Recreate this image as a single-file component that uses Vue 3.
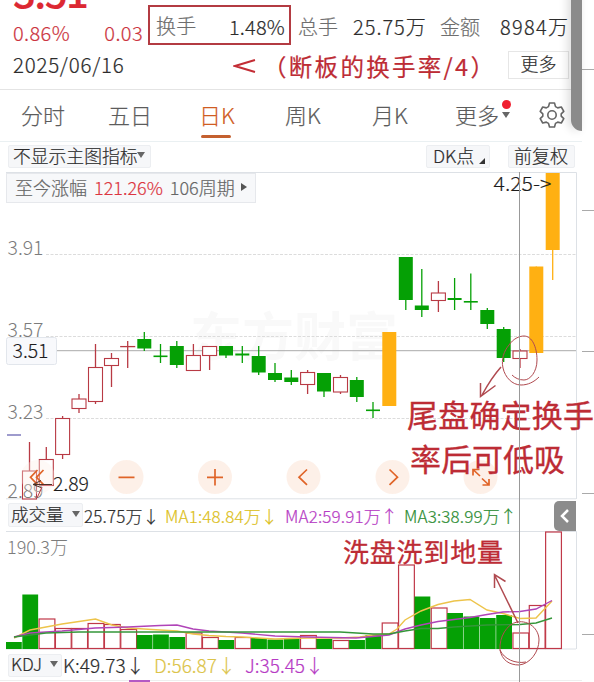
<script setup>
const GREEN = '#05a005'
const RED = '#b83a44'
const ORANGE = '#ffb012'

// [center x, kind, high, body top, body bottom, low]
const candles = [
  [29.5, 'r', 442, 471, 499, 499], [46.3, 'r', 447, 459.5, 485.5, 485.5],
  [62.6, 'r', 416, 418.5, 454.5, 459], [79, 'r', 394, 399, 408.5, 413],
  [95.5, 'r', 344, 367.5, 401.5, 404], [111.5, 'r', 353, 358.5, 365.5, 387],
  [127.7, 'r', 341, 346.5, 346.5, 368], [144.3, 'g', 332, 339, 348.5, 351],
  [160.5, 'g', 344, 355.5, 355.5, 363], [176.8, 'g', 341, 346, 365, 368],
  [193.4, 'r', 344, 355.5, 370.5, 370.5], [209.6, 'r', 346, 346.5, 355.5, 370],
  [226, 'g', 346, 346, 355.5, 358], [242.3, 'g', 346, 353.5, 355.5, 363],
  [258.7, 'g', 346, 356, 372.5, 375], [275, 'g', 363, 373, 380, 382],
  [291.3, 'g', 370, 377.5, 382, 385], [307.6, 'r', 370, 372.5, 384.5, 394],
  [324, 'g', 373, 373, 391.5, 397], [340.5, 'r', 375, 377.5, 392, 394],
  [356.8, 'g', 377, 380, 397, 402], [373, 'g', 402, 409.5, 410.5, 418],
  [389.3, 'o', 332, 332, 406, 406], [405.8, 'g', 257, 257, 300, 310],
  [421.8, 'g', 269, 305.5, 310, 317], [438.4, 'r', 281, 293, 300.5, 312],
  [454.6, 'g', 278, 298, 300, 310], [470.8, 'g', 273.5, 301, 302.5, 310],
  [487.3, 'g', 308, 310, 324, 329], [503.7, 'g', 327, 329, 358, 362],
  [520, 'r', 349, 351, 358.5, 368], [536.3, 'o', 266.5, 266.5, 353, 353],
  [552.7, 'o', 173, 173, 250, 280],
].map(([x, k, h, t, b, l]) => ({
  x, t, h, l, b, k,
  height: Math.max(b - t, 1.6),
  color: k === 'r' ? RED : k === 'g' ? GREEN : ORANGE,
}))

const volumes = [
  ['g', 642], ['g', 594.5], ['r', 619], ['r', 628.5], ['r', 628.5], ['r', 623.5], ['r', 624.5],
  ['r', 629.5], ['g', 635], ['g', 634.5], ['g', 637], ['r', 633], ['r', 637.5], ['g', 640],
  ['r', 637.5], ['g', 638], ['g', 639.5], ['g', 639], ['r', 635.5], ['g', 639], ['r', 640.5],
  ['g', 640], ['g', 635], ['r', 623], ['r', 565], ['g', 596.5], ['r', 608], ['g', 613],
  ['g', 616.5], ['g', 618], ['g', 615], ['r', 633], ['r', 605.5], ['r', 532],
].map(([k, top], i) => ({ k, top, x: 6 + i * 16.34 }))

const maYellow = '14,638 30,630 46,627 62,624 79,621.5 95.5,619 112,625 128,628 144,629 160,630 177,631 193,634 209,635.5 226,636.5 242,637 258,638 275,639 307,638 340,638 360,637 373,635 389,634 397,629 405,620 421,611 438,604.5 454,601 470,599.5 487,610 503,613.5 520,618.5 536,618 552,601'
const maPurple = '14,637 30,633 62,631 95,628 128,627 160,625.5 177,625 193,629 209,631 242,633 275,636 307,637 356,638 389,635 405,629 421,625 438,621.5 454,619.5 470,617.5 487,614.5 503,612 520,611.5 536,609 552,600.5'
const maGreen = '14,637 46,633 79,632 340,632 373,634 389,634 405,631 421,628.5 438,628.5 454,627 487,625 520,624.5 536,623 552,618'

const gridLines = [254.5, 336.5, 418.5]
const axis = [['3.91', 254.5], ['3.57', 336.5], ['3.23', 418.5], ['2.89', 498]]
const tabs = ['分时', '五日', '日K', '周K', '月K']
const controls = [126.5, 215, 303.5, 392.5, 480.5]
const ticks = [69, 210, 351, 493, 634]
</script>

<template>
  <div class="page">
    <main class="screen">
      <header class="quote">
        <div class="left">
          <div class="price">3.51</div>
          <div class="change"><span>0.86%</span><span>0.03</span></div>
        </div>
        <div class="turnover"><span class="label">换手</span><span>1.48%</span></div>
        <div class="stat"><span class="label">总手</span><span class="total">25.75万</span></div>
        <div class="stat"><span class="label">金额</span><span class="amount">8984万</span></div>
      </header>
      <div class="dateline">
        <span class="date">2025/06/16</span>
        <svg class="less" width="24" height="16" viewBox="0 0 24 16"><path d="M22 2 2 8l20 6" /></svg>
        <span class="note">（断板的换手率/4）</span>
        <span class="more">更多</span>
      </div>
      <nav class="tabs">
        <span v-for="t in tabs" :key="t" class="tab" :class="{ active: t === '日K' }">{{ t }}</span>
        <span class="tab tab-more">更多<i class="dot"></i><i class="caret"></i></span>
        <svg class="gear" width="26" height="26" viewBox="0 0 26 26">
          <path d="M10.500 1h5l1 3.600 2.200 1.300 3.600-.9 2.500 4.300-2.600 2.500v2.400l2.600 2.500-2.500 4.300-3.600-.9-2.200 1.300-1 3.600h-5l-1-3.600-2.200-1.300-3.600.9-2.500-4.300 2.600-2.500v-2.400L1.200 9.300 3.700 5l3.600.9 2.200-1.300z" />
          <circle cx="13" cy="13" r="4.200" />
        </svg>
      </nav>
      <div class="toolbar">
        <span class="chip main">不显示主图指标<i class="caret"></i></span>
        <span class="chip dk">DK点<i class="corner"></i></span>
        <span class="chip adj">前复权</span>
      </div>

      <section class="chart">
        <svg width="582" height="327" viewBox="0 172 582 327" font-family="'Noto Sans CJK SC', sans-serif">
          <g class="watermark"><text x="190" y="356" font-size="52" textLength="208" lengthAdjust="spacingAndGlyphs">东方财富</text></g>
          <line v-for="y in gridLines" :key="y" x1="46" x2="576" :y1="y" :y2="y" class="grid" />
          <path d="M6 172.500H576.500V499M6 498.800H576" class="frame" />
          <line x1="56" x2="576" y1="350.700" y2="350.700" class="cross" />
          <line x1="7" x2="21" y1="435" y2="435" stroke="#7470b8" stroke-width="1.400" />
          <g v-for="c in candles" :key="c.x">
            <template v-if="c.k === 'r'">
              <path :d="`M${c.x} ${c.h}V${c.t}M${c.x} ${c.b}V${c.l}`" :stroke="c.color" stroke-width="1.300" />
              <rect :x="c.x - 7" :y="c.t" width="14" :height="c.b - c.t || 0.200" fill="#fff" :stroke="c.color" stroke-width="1.100" />
            </template>
            <template v-else>
              <line :x1="c.x" :x2="c.x" :y1="c.h" :y2="c.l" :stroke="c.color" stroke-width="1.300" />
              <rect :x="c.x - 7" :y="c.t" width="14" :height="c.height" :fill="c.color" />
            </template>
          </g>
          <text v-for="a in axis" :key="a[0]" x="7.500" :y="a[1]" class="axis" textLength="36" lengthAdjust="spacingAndGlyphs">{{ a[0] }}</text>
          <circle v-for="x in controls" :key="x" :cx="x" cy="477" r="17" fill="#fdeee6" fill-opacity=".9" />
          <circle cx="38" cy="477" r="17" fill="#fdeee6" fill-opacity=".35" />
          <g class="icons">
            <path d="M118.500 477.300h16M207 477.300h16M215 469v16.500M307 469.500l-8 7.700 8 7.700M389.500 469.500l8 7.700-8 7.700" />
            <path d="M480 476l-7-6.500m0 6v-6h6.500M482 478.500l7 6.500m0-6v6h-6.500" />
            <path d="M37.500 470l-7 7.300 7 7.300M43.500 470l-7 7.300 7 7.300" />
          </g>
          <path d="M37 498l5-11" stroke="#b83a44" fill="none" />
          <path d="M41 480.500l-8 4 8 3M33 484.500h19" stroke="#4a3028" fill="none" />
          <text x="53" y="491" class="mark" textLength="36" lengthAdjust="spacingAndGlyphs">2.89</text>
          <text x="493.500" y="191" class="mark" textLength="58" lengthAdjust="spacingAndGlyphs">4.25-&gt;</text>
          <rect x="6.500" y="337.500" width="50" height="27" rx="2" fill="#f8f9fc" stroke="#e2e6ec" />
          <text x="12.500" y="358" class="mark" textLength="36" lengthAdjust="spacingAndGlyphs">3.51</text>
          <g class="pen">
            <path d="M509 345c4-6 10-9 15-9 8 0 13 11 13 24 0 12-7 20-13 20-5 0-9-2-12-5M509 345c-5 6-8 14-6 23 2 9 9 17 18 17 7 0 13-3 18-8" />
            <path d="M501 367c-8 9-13 17-19 28M480.500 383v13.500l15-11" stroke-width="1.500" />
          </g>
          <g class="hand">
            <text x="407" y="427" font-size="31" textLength="187">尾盘确定换手</text>
            <text x="410" y="471" font-size="31" textLength="155">率后可低吸</text>
          </g>
        </svg>
        <div class="gain"><span>至今涨幅</span><b>121.26%</b><span>106周期</span><i></i></div>
      </section>

      <div class="legend">
        <span class="chip pick">成交量<i class="caret"></i></span>
        <span class="v1">25.75万↓</span>
        <span class="v2">MA1:48.84万↓</span>
        <span class="v3">MA2:59.91万↑</span>
        <span class="v4">MA3:38.99万↑</span>
        <span class="fold"><svg width="10" height="16" viewBox="0 0 10 16"><path d="M8 2 2 8l6 6" /></svg></span>
      </div>

      <section class="volume">
        <svg width="582" height="119" viewBox="0 531 582 119" font-family="'Noto Sans CJK SC', sans-serif">
          <path d="M6 531.500H576.500V649M6 649H576" class="frame" />
          <text x="7" y="553.500" class="axis scale" textLength="61" lengthAdjust="spacingAndGlyphs">190.3万</text>
          <g v-for="v in volumes" :key="v.x">
            <rect v-if="v.k === 'g'" :x="v.x" :y="v.top" width="15.800" :height="649 - v.top" fill="#05a005" />
            <rect v-else :x="v.x + 0.400" :y="v.top" width="15.800" :height="648.500 - v.top" fill="#fff" stroke="#c03848" stroke-width="1.200" />
          </g>
          <polyline :points="maYellow" stroke="#edc44b" class="ma" />
          <polyline :points="maPurple" stroke="#b044b8" class="ma" />
          <polyline :points="maGreen" stroke="#35963a" class="ma" />
          <g class="pen">
            <path d="M518 623L495 576M494.500 588v-13.500l11 7" stroke-width="1.500" />
            <path d="M500 650c-1-13 7-26 17-28 12-2 22 7 22 18 0 12-9 24-20 25-10 0-17-5-19-15 4 9 15 14 26 12" />
          </g>
          <g class="hand"><text x="343" y="562" font-size="26" textLength="160">洗盘洗到地量</text></g>
        </svg>
      </section>

      <div class="legend kdj">
        <span class="chip pick">KDJ<i class="caret"></i></span>
        <span class="k">K:49.73↓</span>
        <span class="d">D:56.87↓</span>
        <span class="j">J:35.45↓</span>
      </div>
      <div class="kdj-plot"><i></i></div>
      <div class="vline"></div>
      <div class="handle"></div>
    </main>
    <aside class="ruler"><i v-for="t in ticks" :key="t" :style="{ top: t + 'px' }"></i></aside>
  </div>
</template>

<style>
body { background: #fff; }
</style>

<style scoped>
.page { display: flex; width: 594px; height: 682px; overflow: hidden; font-family: 'Noto Sans CJK SC', sans-serif; font-weight: 300; color: #2c2c2c; background: #fff; -webkit-text-stroke: .2px currentColor; }
.page * { box-sizing: border-box; }
.screen { position: relative; z-index: 1; width: 582px; height: 682px; flex: none; }
.quote { display: flex; height: 48px; font-size: 20px; line-height: 28px; white-space: nowrap; align-items: flex-start; }
.left { width: 148px; padding-left: 13px; flex: none; }
.price { margin-top: -28px; font-size: 40px; line-height: 38px; height: 48px; font-weight: 500; color: #dc2832; letter-spacing: -1.500px; }
.change { display: flex; justify-content: space-between; color: #cc3440; padding-right: 5px; margin-top: -1px; letter-spacing: .4px; }
.turnover { display: flex; justify-content: space-between; width: 143px; height: 40px; margin-top: 5px; padding: 8px 4px 0 6px; border: 2px solid #b33b42; line-height: 24px; letter-spacing: .2px; flex: none; }
.label { color: #6e6e6e; }
.turnover .label { margin-top: -1px; }
.stat { display: flex; margin-top: 13px; padding-left: 7px; }
.total { width: 80px; margin-left: 15px; letter-spacing: 1px; }
.amount { margin-left: 20px; letter-spacing: 1.300px; }
.dateline { display: flex; align-items: center; height: 42px; border-bottom: 1px solid #e4e4e4; padding: 0 0 9px 13px; font-size: 20.500px; white-space: nowrap; }
.date { width: 220px; letter-spacing: .75px; }
.less { flex: none; margin-top: 4px; }
.less path { fill: none; stroke: #c32d35; stroke-width: 2; }
.note { width: 251px; margin-top: 4px; padding-left: 6px; color: #bd2c35; font-size: 23.500px; font-weight: 400; letter-spacing: 2.300px; flex: none; }
.more { width: 61px; height: 28px; margin-top: 1px; border: 1px solid #e6e6e6; font-size: 18px; line-height: 23px; text-align: center; }
.tabs { display: flex; align-items: center; height: 52px; padding: 0 0 0 21px; border-bottom: 1px solid #eaf0f2; font-size: 22px; color: #5c5c5c; }
.tab { position: relative; width: 87px; height: 50px; line-height: 46px; flex: none; }
.tab.active { color: #d05c22; padding-left: 4px; }
.tab.active::after { content: ''; position: absolute; left: 6px; bottom: 3px; width: 30px; height: 3px; border-radius: 2px; background: #c4602f; }
.tab:nth-child(4), .tab:nth-child(5) { padding-left: 3px; }
.tab-more { width: 83px; text-indent: -1px; }
.dot { position: absolute; left: 46px; top: 9px; width: 9px; height: 9px; border-radius: 50%; background: #f02030; }
.caret { display: inline-block; border: 4px solid transparent; border-top: 6px solid #666; border-bottom: 0; }
.tab-more .caret { position: absolute; left: 46px; top: 21px; }
.gear { margin-top: -2px; fill: none; stroke: #666; stroke-width: 1.600; stroke-linejoin: round; }
.toolbar { display: flex; height: 30px; padding: 3px 7px 0 8px; font-size: 18px; }
.chip { display: flex; align-items: center; height: 23px; padding-bottom: 3px; background: #f6f7f9; border: 1px solid #eceef1; border-radius: 2px; white-space: nowrap; flex: none; }
.main { width: 143px; padding-left: 4px; font-size: 17.800px; }
.dk { width: 64px; margin-left: 275px; padding-left: 6px; }
.corner { margin: 12px 0 0 5px; border-left: 6px solid transparent; border-bottom: 6px solid #333; }
.adj { width: 67px; margin-left: 18px; padding-left: 5px; }
.chart { position: relative; height: 327px; }
.chart svg, .volume svg { display: block; overflow: visible; }
.gain { position: absolute; left: 6px; top: 1px; display: flex; align-items: center; width: 250px; height: 30px; padding: 0 0 2px 8px; background: #f7f8fa; border: 1px solid #e6e8ec; font-size: 18px; color: #666; white-space: nowrap; }
.gain b { margin: 0 7px; color: #dc3540; font-weight: 300; }
.gain i { margin-left: 6px; border: 4px solid transparent; border-left: 6px solid #555; border-right: 0; }
.watermark { fill: #f9f9f9; font-weight: 700; }
.grid { stroke: #dcdcdc; stroke-dasharray: 3 1.500; }
.frame { fill: none; stroke: #dde1e6; }
.cross { stroke: #aaa; }
.axis { font-size: 19.500px; fill: #7c7c7c; font-weight: 300; }
.scale { font-size: 18px; }
.mark { font-size: 19.500px; fill: #1c1c1c; font-weight: 300; stroke: #1c1c1c; stroke-width: .15; }
.icons { fill: none; stroke: #e06428; stroke-width: 1.700; }
.pen { fill: none; stroke: #b04a50; stroke-width: 1; }
.hand { fill: #bd2c35; font-weight: 400; stroke: #bd2c35; stroke-width: .3; }
.legend { display: flex; align-items: center; height: 32px; padding-left: 8px; font-size: 17px; white-space: nowrap; }
.pick { width: 75px; height: 24px; padding-left: 2px; font-size: 17.500px; }
.pick .caret { margin-left: 8px; }
.v1, .v2, .v3, .v4 { flex: none; letter-spacing: .15px; }
.v1 { width: 81px; margin-left: 1px; }
.v2 { width: 120px; color: #dcc020; }
.v3 { width: 119px; color: #b63ac4; }
.v4 { width: 150px; color: #2c8c32; }
.fold { display: flex; align-items: center; justify-content: center; width: 22px; height: 30px; margin-top: 2px; background: #8c8c8c; border-radius: 5px 0 0 5px; flex: none; }
.fold path { fill: none; stroke: #fff; stroke-width: 2.500; }
.volume { height: 119px; }
.ma { fill: none; stroke-width: 1.400; }
.kdj { height: 30px; font-size: 19px; }
.kdj > span { margin-top: -2px; }
.kdj .pick { width: 54px; height: 23px; margin-top: 0; }
.k { width: 91px; margin-left: 1px; letter-spacing: .1px; }
.d { width: 91px; color: #dcc44a; }
.j { color: #b63ac4; }
.kdj-plot { height: 1px; background: #eee; padding-left: 129px; }
.kdj-plot i { display: block; width: 21px; height: 2px; background: #b45ac4; }
.vline { position: absolute; left: 519px; top: 172px; width: 1px; height: 510px; background: #999; }
.handle { position: absolute; left: 571px; top: -10px; width: 11px; height: 141px; background: #8b8b8b; border-radius: 0 0 0 11px; box-shadow: -3px 0 10px rgba(0, 0, 0, .14); }
.ruler { position: relative; width: 12px; background: #fff; }
.ruler i { position: absolute; left: 0; width: 12px; height: 1px; background: #aaa; }
</style>
